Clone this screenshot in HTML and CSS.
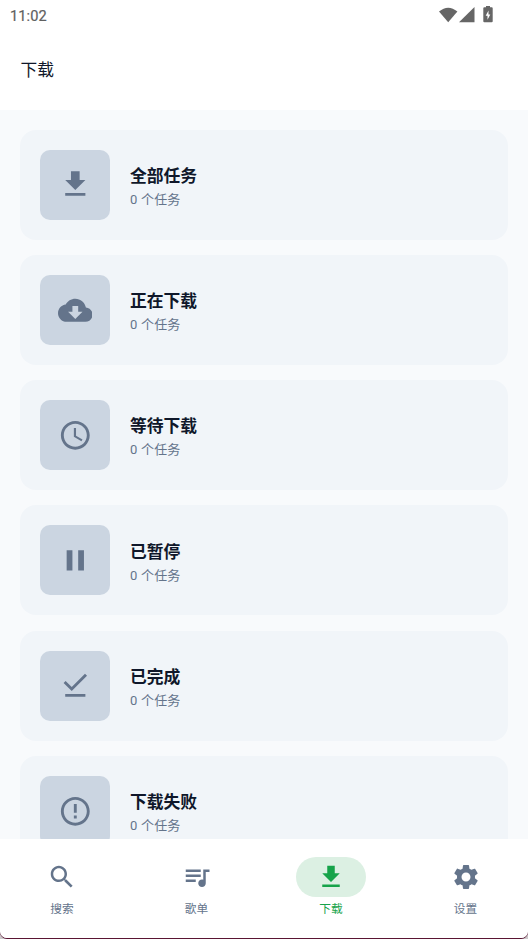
FILE: index.html
```html
<!DOCTYPE html>
<html lang="zh-CN">
<head>
<meta charset="utf-8">
<title>下载</title>
<link rel="stylesheet" href="styles.css">
</head>
<body>
<div class="frame">
<div class="app">
  <header class="header">
    <div class="status">
      <span class="time">11:02</span>
      <svg class="status-icons" viewBox="0 0 56 20" width="56" height="20">
        <path d="M0 5.5Q9.2-2.2 18.4 5.5L9.2 16.2z"/>
        <path d="M35.5 1v15.2H20z"/>
        <path fill-rule="evenodd" d="M47 0h4v1.3h1.7q1 0 1 1v13q0 1-1 1h-7.4q-1 0-1-1v-13q0-1 1-1h1.7zM49.5 4.5l-2.8 5.2h1.8v4.1l2.8-5.3h-1.8z"/>
      </svg>
    </div>
    <h1 class="title">下载</h1>
  </header>
  <main class="list">
    <section class="card">
      <div class="tile"><svg viewBox="0 0 24 24"><path d="M19 9h-4V3H9v6H5l7 7 7-7zM5 18v2h14v-2H5z"/></svg></div>
      <div class="info"><h2>全部任务</h2><p>0 个任务</p></div>
    </section>
    <section class="card">
      <div class="tile"><svg viewBox="0 0 24 24"><path d="M19.35 10.04C18.67 6.59 15.64 4 12 4 9.11 4 6.6 5.64 5.35 8.04 2.34 8.36 0 10.91 0 14c0 3.31 2.69 6 6 6h13c2.76 0 5-2.24 5-5 0-2.64-2.05-4.78-4.65-4.96zM17 13l-5 5-5-5h3V9h4v4h3z"/></svg></div>
      <div class="info"><h2>正在下载</h2><p>0 个任务</p></div>
    </section>
    <section class="card">
      <div class="tile"><svg viewBox="0 0 24 24"><path d="M11.99 2C6.47 2 2 6.48 2 12s4.47 10 9.99 10C17.52 22 22 17.52 22 12S17.52 2 11.99 2zM12 20c-4.42 0-8-3.58-8-8s3.58-8 8-8 8 3.58 8 8-3.58 8-8 8zm.5-13H11v6l5.25 3.15.75-1.23-4.5-2.67z"/></svg></div>
      <div class="info"><h2>等待下载</h2><p>0 个任务</p></div>
    </section>
    <section class="card">
      <div class="tile"><svg viewBox="0 0 24 24"><path d="M6 19h4V5H6v14zm8-14v14h4V5h-4z"/></svg></div>
      <div class="info"><h2>已暂停</h2><p>0 个任务</p></div>
    </section>
    <section class="card">
      <div class="tile"><svg viewBox="0 0 24 24"><path d="M20.13 5.41 18.72 4l-9.19 9.19-4.25-4.25-1.41 1.41 5.66 5.66zM5 18h14v2H5z"/></svg></div>
      <div class="info"><h2>已完成</h2><p>0 个任务</p></div>
    </section>
    <section class="card">
      <div class="tile"><svg viewBox="0 0 24 24"><path d="M11 15h2v2h-2zm0-8h2v6h-2zm.99-5C6.47 2 2 6.48 2 12s4.47 10 9.99 10C17.52 22 22 17.52 22 12S17.52 2 11.99 2zM12 20c-4.42 0-8-3.58-8-8s3.58-8 8-8 8 3.58 8 8-3.58 8-8 8z"/></svg></div>
      <div class="info"><h2>下载失败</h2><p>0 个任务</p></div>
    </section>
  </main>
  <nav class="nav">
    <a class="item"><span class="pill"><svg viewBox="0 0 24 24"><path d="M15.5 14h-.79l-.28-.27C15.41 12.59 16 11.11 16 9.5 16 5.91 13.09 3 9.5 3S3 5.91 3 9.5 5.91 16 9.5 16c1.61 0 3.09-.59 4.23-1.57l.27.28v.79l5 4.99L20.49 19l-4.99-5zm-6 0C7.01 14 5 11.99 5 9.5S7.01 5 9.5 5 14 7.01 14 9.5 11.99 14 9.5 14z"/></svg></span><span class="label">搜索</span></a>
    <a class="item"><span class="pill"><svg viewBox="0 0 24 24"><path d="M15 6H3v2h12V6zm0 4H3v2h12v-2zM3 16h8v-2H3v2zM17 6v8.18c-.31-.11-.65-.18-1-.18-1.66 0-3 1.34-3 3s1.34 3 3 3 3-1.34 3-3V8h3V6h-5z"/></svg></span><span class="label">歌单</span></a>
    <a class="item active"><span class="pill"><svg viewBox="0 0 24 24"><path d="M19 9h-4V3H9v6H5l7 7 7-7zM5 18v2h14v-2H5z"/></svg></span><span class="label">下载</span></a>
    <a class="item"><span class="pill"><svg viewBox="0 0 24 24"><path d="M19.14 12.94c.04-.3.06-.61.06-.94 0-.32-.02-.64-.07-.94l2.03-1.58c.18-.14.23-.41.12-.61l-1.92-3.32c-.12-.22-.37-.29-.59-.22l-2.39.96c-.5-.38-1.03-.7-1.62-.94l-.36-2.54c-.04-.24-.24-.41-.48-.41h-3.84c-.24 0-.43.17-.47.41l-.36 2.54c-.59.24-1.13.57-1.62.94l-2.39-.96c-.22-.08-.47 0-.59.22L2.74 8.87c-.12.21-.08.47.12.61l2.03 1.58c-.05.3-.09.63-.09.94s.02.64.07.94l-2.03 1.58c-.18.14-.23.41-.12.61l1.92 3.32c.12.22.37.29.59.22l2.39-.96c.5.38 1.03.7 1.62.94l.36 2.54c.05.24.24.41.48.41h3.84c.24 0 .44-.17.47-.41l.36-2.54c.59-.24 1.13-.56 1.62-.94l2.39.96c.22.08.47 0 .59-.22l1.92-3.32c.12-.22.07-.47-.12-.61l-2.01-1.58zM12 15.6c-1.98 0-3.6-1.62-3.6-3.6s1.62-3.6 3.6-3.6 3.6 1.62 3.6 3.6-1.62 3.6-3.6 3.6z"/></svg></span><span class="label">设置</span></a>
  </nav>
</div>
</div>
</body>
</html>
```
FILE: styles.css
```css
* { box-sizing: border-box; margin: 0; padding: 0; }
body { background: #ccc8ca; font-family: Roboto, "Noto Sans CJK SC", sans-serif; }
.frame { height: 939px; overflow: hidden; background: #5a1533; border-radius: 0 0 7px 7px; }
.app { height: 938px; display: flex; flex-direction: column; overflow: hidden; background: #f8fafc; border-radius: 0 0 7px 7px; }
.header { flex: none; height: 109.5px; background: #fff; }
.status { display: flex; justify-content: space-between; height: 30px; padding: 6px 33px 0 10px; }
.time { font-size: 14.6px; line-height: 20px; font-weight: 400; letter-spacing: .1px; color: #606060; -webkit-text-stroke: .2px #606060; }
.status-icons { fill: #666; }
.title { padding: 28px 20.5px 0; font-size: 16.7px; line-height: 26px; font-weight: 400; color: #0f172a; }
.list { flex: 1; min-height: 0; overflow: hidden; display: flex; flex-direction: column; gap: 15.25px; padding: 20.1px 20px 0; }
.card { flex: none; display: flex; align-items: center; gap: 20px; height: 110px; padding: 20px; border-radius: 16px; background: #f1f5f9; }
.tile { display: flex; align-items: center; justify-content: center; width: 70px; height: 70px; border-radius: 10px; background: #cbd5e1; }
.tile svg { width: 34.6px; height: 34.6px; fill: #64748b; }
.info { padding-top: 4.4px; }
.info h2 { font-size: 16.8px; line-height: 25px; font-weight: 700; color: #0f172a; }
.info p { font-size: 13px; line-height: 20px; letter-spacing: .2px; color: #64748b; margin-top: 1px; }
.nav { flex: none; display: flex; justify-content: space-between; height: 99px; padding: 18px 27.5px 0 27px; background: #fff; }
.item { display: flex; flex-direction: column; align-items: center; color: #64748b; }
.pill { display: flex; align-items: center; justify-content: center; width: 70px; height: 40px; border-radius: 20px; }
.pill svg { width: 30px; height: 30px; fill: currentColor; }
.label { font-size: 11.7px; line-height: 18px; margin-top: 3px; }
.active { color: #16a34a; }
.active .pill { background: #dcf0e3; }
```
